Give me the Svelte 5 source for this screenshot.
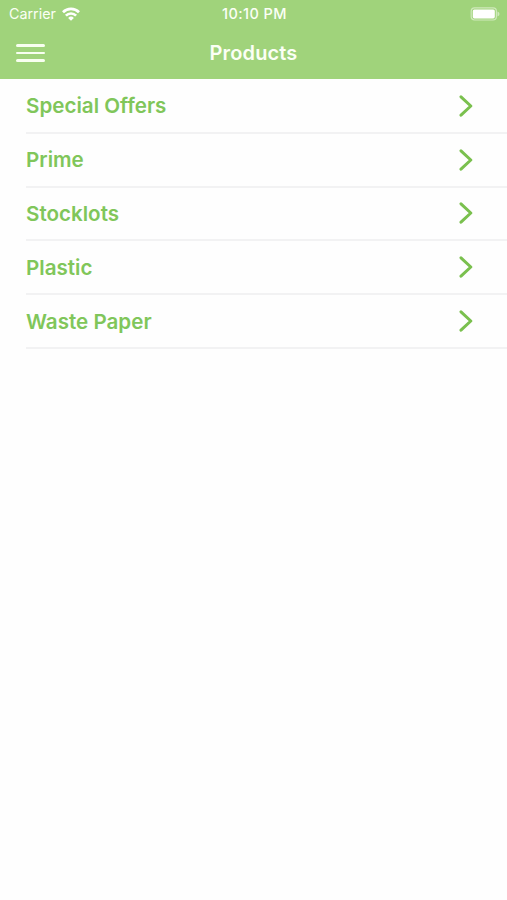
<script lang="ts">
  const categories: string[] = [
    "Special Offers",
    "Prime",
    "Stocklots",
    "Plastic",
    "Waste Paper",
  ];
</script>

<main>
  <header>
    <div class="status">
      <div class="status__carrier">
        <span>Carrier</span>
        <svg class="wifi" viewBox="0 0 18 14" width="18" height="14">
          <path d="M1 5.2a11.4 11.4 0 0 1 16 0" />
          <path d="M3.9 8.6a7.2 7.2 0 0 1 10.2 0" />
          <path class="wifi__dot" d="M9 13.8 6.1 10.9a4.1 4.1 0 0 1 5.8 0z" />
        </svg>
      </div>
      <div class="status__time">10:10 PM</div>
      <svg class="battery" viewBox="0 0 30 14" width="30" height="14">
        <rect class="battery__case" x="1.2" y="0.8" width="25.2" height="12.2" rx="3.4" />
        <rect x="2.8" y="2.4" width="22" height="9" rx="1.6" />
        <path class="battery__tip" d="M27.5 4.5q2 .7 2 2.5t-2 2.5z" />
      </svg>
    </div>
    <div class="navbar">
      <button class="menu" aria-label="Menu">
        <span></span>
        <span></span>
        <span></span>
      </button>
      <h1>Products</h1>
    </div>
  </header>

  <ul>
    {#each categories as category}
      <li>
        <span>{category}</span>
        <svg class="chevron" viewBox="0 0 14 24" width="14" height="24">
          <path d="M2 2.8 11.8 12 2 21.2" />
        </svg>
      </li>
    {/each}
  </ul>
</main>

<style>
:global(body) {
  margin: 0;
  background-color: #fefefe;
  font-family: Inter, "Liberation Sans", sans-serif;
}
header {
  height: 79px;
  background-color: #a0d37b;
  color: #fbfff5;
}
.status {
  display: grid;
  grid-template-columns: 1fr auto 1fr;
  align-items: center;
  height: 27px;
  padding: 0 7px 0 9px;
}
.status__carrier {
  display: flex;
  align-items: center;
  gap: 6px;
  font-size: 14.3px;
}
.wifi {
  fill: none;
  stroke: #fff;
  stroke-width: 2.7;
}
.wifi__dot {
  fill: #fff;
  stroke: none;
}
.status__time {
  font-size: 14.5px;
  font-weight: 500;
  letter-spacing: 0.4px;
}
.battery {
  justify-self: end;
  fill: #fff;
}
.battery__case {
  fill: none;
  stroke: #cfe9bc;
  stroke-width: 1.2;
}
.battery__tip {
  fill: #cfe9bc;
}
.navbar {
  display: grid;
  grid-template-columns: 1fr auto 1fr;
  align-items: center;
  height: 52px;
  padding: 0 16px;
}
.menu {
  display: flex;
  flex-direction: column;
  gap: 5px;
  width: 29px;
  padding: 0;
  border: none;
  background: none;
}
.menu span {
  height: 2.4px;
  border-radius: 2px;
  background-color: #f8fff0;
}
h1 {
  margin: 0;
  font-size: 20px;
  font-weight: 600;
  letter-spacing: 0.15px;
}
ul {
  margin: 0;
  padding: 1px 0 0 26px;
  list-style: none;
}
li {
  display: flex;
  align-items: center;
  justify-content: space-between;
  box-sizing: border-box;
  height: 53.8px;
  padding-right: 34px;
  border-bottom: 2px solid #f2f2f3;
  color: #80c65a;
  font-size: 20.6px;
  font-weight: 600;
}
.chevron {
  fill: none;
  stroke: #7ac04e;
  stroke-width: 3;
  stroke-linecap: round;
  stroke-linejoin: round;
}
</style>
